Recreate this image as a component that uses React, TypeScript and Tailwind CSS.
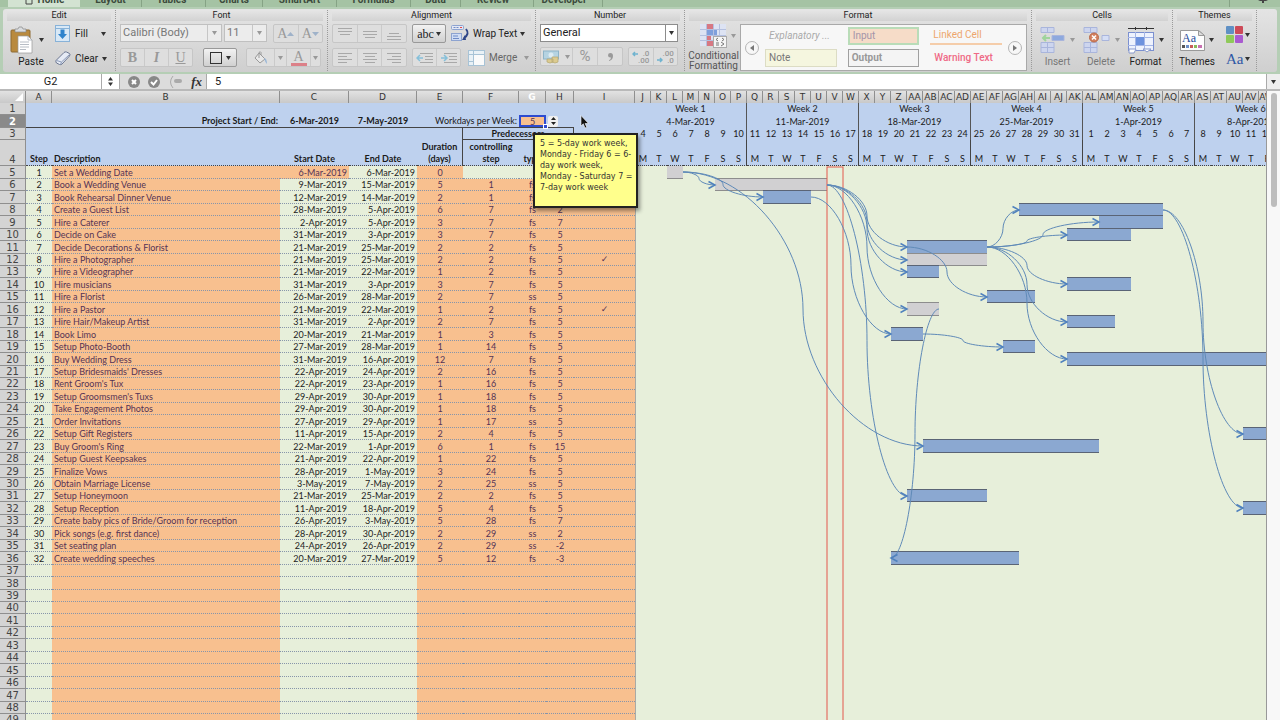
import { FC, ReactNode } from 'react';

type Task = [string, string, string, number, string, string, string, boolean?];

// description, start, end, duration, controlling step, type, lag, fixed
const TASKS: Task[] = [
    ['Set a Wedding Date', '6-Mar-2019', '6-Mar-2019', 0, '', '', ''],
    ['Book a Wedding Venue', '9-Mar-2019', '15-Mar-2019', 5, '1', 'fs', '5'],
    ['Book Rehearsal Dinner Venue', '12-Mar-2019', '14-Mar-2019', 2, '1', 'fs', '5'],
    ['Create a Guest List', '28-Mar-2019', '5-Apr-2019', 6, '7', 'fs', '2'],
    ['Hire a Caterer', '2-Apr-2019', '5-Apr-2019', 3, '7', 'fs', '7'],
    ['Decide on Cake', '31-Mar-2019', '3-Apr-2019', 3, '7', 'fs', '5'],
    ['Decide Decorations & Florist', '21-Mar-2019', '25-Mar-2019', 2, '2', 'fs', '5'],
    ['Hire a Photographer', '21-Mar-2019', '25-Mar-2019', 2, '2', 'fs', '5', true],
    ['Hire a Videographer', '21-Mar-2019', '22-Mar-2019', 1, '2', 'fs', '5'],
    ['Hire musicians', '31-Mar-2019', '3-Apr-2019', 3, '7', 'fs', '5'],
    ['Hire a Florist', '26-Mar-2019', '28-Mar-2019', 2, '7', 'ss', '5'],
    ['Hire a Pastor', '21-Mar-2019', '22-Mar-2019', 1, '2', 'fs', '5', true],
    ['Hire Hair/Makeup Artist', '31-Mar-2019', '2-Apr-2019', 2, '7', 'fs', '5'],
    ['Book Limo', '20-Mar-2019', '21-Mar-2019', 1, '3', 'fs', '5'],
    ['Setup Photo-Booth', '27-Mar-2019', '28-Mar-2019', 1, '14', 'fs', '5'],
    ['Buy Wedding Dress', '31-Mar-2019', '16-Apr-2019', 12, '7', 'fs', '5'],
    ["Setup Bridesmaids' Dresses", '22-Apr-2019', '24-Apr-2019', 2, '16', 'fs', '5'],
    ["Rent Groom's Tux", '22-Apr-2019', '23-Apr-2019', 1, '16', 'fs', '5'],
    ["Setup Groomsmen's Tuxs", '29-Apr-2019', '30-Apr-2019', 1, '18', 'fs', '5'],
    ['Take Engagement Photos', '29-Apr-2019', '30-Apr-2019', 1, '18', 'fs', '5'],
    ['Order Invitations', '27-Apr-2019', '29-Apr-2019', 1, '17', 'ss', '5'],
    ['Setup Gift Registers', '11-Apr-2019', '15-Apr-2019', 2, '4', 'fs', '5'],
    ["Buy Groom's Ring", '22-Mar-2019', '1-Apr-2019', 6, '1', 'fs', '15'],
    ['Setup Guest Keepsakes', '21-Apr-2019', '22-Apr-2019', 1, '22', 'fs', '5'],
    ['Finalize Vows', '28-Apr-2019', '1-May-2019', 3, '24', 'fs', '5'],
    ['Obtain Marriage License', '3-May-2019', '7-May-2019', 2, '25', 'ss', '5'],
    ['Setup Honeymoon', '21-Mar-2019', '25-Mar-2019', 2, '2', 'fs', '5'],
    ['Setup Reception', '11-Apr-2019', '18-Apr-2019', 5, '4', 'fs', '5'],
    ['Create baby pics of Bride/Groom for reception', '26-Apr-2019', '3-May-2019', 5, '28', 'fs', '7'],
    ['Pick songs (e.g. first dance)', '28-Apr-2019', '30-Apr-2019', 2, '29', 'ss', '2'],
    ['Set seating plan', '24-Apr-2019', '26-Apr-2019', 2, '29', 'ss', '-2'],
    ['Create wedding speeches', '20-Mar-2019', '27-Mar-2019', 5, '12', 'fs', '-3'],
];

const ROWS = 46;
const DAY = 16;

// sheet row, first day, number of days, done
const BARS: [number, number, number, boolean?][] = [
    [5, 2, 1, true],
    [6, 5, 7, true],
    [7, 8, 3],
    [8, 24, 9],
    [9, 29, 4],
    [10, 27, 4],
    [11, 17, 5],
    [12, 17, 5, true],
    [13, 17, 2],
    [14, 27, 4],
    [15, 22, 3],
    [16, 17, 2, true],
    [17, 27, 3],
    [18, 16, 2],
    [19, 23, 2],
    [20, 27, 17],
    [26, 38, 5],
    [27, 18, 11],
    [31, 17, 5],
    [32, 38, 8],
    [36, 16, 8],
];

// from row, from day, to row, to day
const LINKS = [
    [5, 3, 6, 5],
    [5, 3, 7, 8],
    [5, 3, 27, 18],
    [6, 12, 11, 17],
    [6, 12, 12, 17],
    [6, 12, 13, 17],
    [6, 12, 16, 17],
    [6, 12, 31, 17],
    [7, 11, 18, 16],
    [11, 17, 15, 22],
    [11, 22, 8, 24],
    [11, 22, 9, 29],
    [11, 22, 10, 27],
    [11, 22, 14, 27],
    [11, 22, 17, 27],
    [11, 22, 20, 27],
    [18, 18, 19, 23],
    [16, 19, 36, 16],
    [8, 33, 26, 38],
    [8, 33, 32, 38],
];

const WEEKS = ['4-Mar-2019', '11-Mar-2019', '18-Mar-2019', '25-Mar-2019', '1-Apr-2019', '8-Apr-2019'];
const DAYS = Array.from({ length: WEEKS.length * 7 }, (_, i) => i);

const columnName = (n: number): string =>
    (n >= 26 ? String.fromCharCode(64 + Math.floor(n / 26)) : '') + String.fromCharCode(65 + (n % 26));

// rows alternate between 13 and 12 pixels, four tall ones in every nine
const isTall = (i: number) => i % 9 !== 8 && (i % 9) % 2 === 0;
const rowTop = (i: number) => 12 * i + 4 * Math.floor(i / 9) + Math.ceil((i % 9) / 2);
const rowMid = (row: number) => rowTop(row - 5) + 6;

const Caret: FC<{ dim?: boolean }> = ({ dim }) => (
    <svg width="5" height="4" viewBox="0 0 5 4" className="shrink-0">
        <path d="M0 0h5L2.5 4z" fill={dim ? '#999' : '#333'} />
    </svg>
);

const Group: FC<{ title: string; className: string; children: ReactNode }> = ({ title, className, children }) => (
    <section className={`flex flex-col border-r border-dotted border-[#9a9a9a] ${className}`}>
        <h2 className="mx-1 h-[11px] bg-linear-to-b from-[#e6e6e6] to-[#d2d2d2] text-center text-[9px] leading-[11px] text-[#222]">
            {title}
        </h2>
        {children}
    </section>
);

const box = 'flex h-[19px] items-stretch rounded-[2px] border border-[#c6c6c6] bg-[#dedede] text-[#999]';
const cell = 'flex flex-1 items-center justify-center border-r border-[#cacaca] last:border-r-0';

const Lines: FC<{ rows: number[][] }> = ({ rows }) => (
    <svg width="16" height="14" viewBox="0 0 16 14" fill="none" stroke="#a8a8a8">
        {rows.map(([x, w, y]) => (
            <path key={y} d={`M${x} ${y}.5h${w}`} />
        ))}
    </svg>
);

const TABS: [string, string][] = [
    ['Layout', 'w-[62px]'],
    ['Tables', 'w-[64px] pr-1'],
    ['Charts', 'w-[57px]'],
    ['SmartArt', 'w-[74px]'],
    ['Formulas', 'w-[74px]'],
    ['Data', 'w-[50px]'],
    ['Review', 'w-[73px] pr-2'],
    ['Developer', 'w-[69px] pr-2'],
];

const TabBar = () => (
    <nav className="flex h-[7px] shrink-0 items-end overflow-hidden bg-[#a5c3a4] pl-2 text-[10px] font-bold leading-[15px] text-[#3c4a3c]">
        <a href="#home" className="flex w-[72px] items-center justify-center gap-1 bg-[#d3e3d2]">
            <svg width="10" height="10" viewBox="0 0 10 10" fill="none" stroke="#444">
                <path d="M1 5l4-4 4 4M2 5v4h6V5" />
            </svg>
            Home
        </a>
        {TABS.map(([name, width]) => (
            <a key={name} href={`#${name}`} className={`border-r border-[#86a385] text-center ${width}`}>
                {name}
            </a>
        ))}
        <span className="ml-auto mr-3 flex h-full items-start border-l border-[#86a385] pl-7">
            <svg width="10" height="4" viewBox="0 0 10 4">
                <path d="M0 0h10l-2 1H6v2H4V1H2z" fill="#444" />
            </svg>
        </span>
    </nav>
);

const EditGroup = () => (
    <Group title="Edit" className="w-[113px]">
        <div className="flex pl-[6px] pt-[3px]">
            <button className="flex w-10 flex-col text-[10px] leading-[12px]">
                <span className="flex items-center gap-[6px] pb-[2px] pt-[2px]">
                    <svg width="24" height="28" viewBox="0 0 24 28">
                        <rect x="2" y="4" width="19" height="22" rx="1" fill="#b98a3e" stroke="#8d6a33" />
                        <path d="M6 6V3h3l1-2h3l1 2h3v3z" fill="#d9dcdf" stroke="#888" strokeWidth=".7" />
                        <path d="M9 10h10l4 4v13H9z" fill="#fff" stroke="#999" strokeWidth=".7" />
                        <path d="M19 10v4h4M11 16h9M11 18.500h9M11 21h9M11 23.500h6" fill="none" stroke="#a5acb6" strokeWidth=".8" />
                    </svg>
                    <Caret />
                </span>
                <span className="pl-1">Paste</span>
            </button>
            <div className="flex flex-col gap-[6px] pl-[6px] text-[10px]">
                <button className="flex h-[19px] w-[51px] items-center gap-[5px]">
                    <svg width="15" height="17" viewBox="0 0 15 17" className="shrink-0">
                        <rect x=".5" y=".5" width="14" height="16" fill="#d8e8f6" stroke="#88b2d8" />
                        <path d="M.5 3.500h14" stroke="#88b2d8" />
                        <path d="M5.500 4.500h4v4.500H12l-4.500 5L3 9h2.500z" fill="#2e83cc" />
                    </svg>
                    <span className="flex-1 text-left">Fill</span>
                    <Caret />
                </button>
                <button className="flex h-[19px] w-[51px] items-center gap-1">
                    <svg width="16" height="15" viewBox="0 0 16 15" className="shrink-0">
                        <path d="M1 9.500L9 1.500q1-1 2.500-.5l3 1.500q1 1 0 2.500L7 13q-1 1-2.500.5L1.500 12Q.5 11 1 9.500z" fill="#e6ebf5" stroke="#6b7690" />
                        <path d="M1.500 9.500l5 1.500L14.500 3.500M6.500 11L5.500 13.500" fill="none" stroke="#8b9ab8" />
                    </svg>
                    <span className="flex-1 text-left">Clear</span>
                    <Caret />
                </button>
            </div>
        </div>
    </Group>
);

const FontGroup = () => (
    <Group title="Font" className="w-[212px]">
        <div className="flex flex-col gap-[5px] px-1 pt-[3px]">
            <div className="flex gap-[2px]">
                <label className="flex h-[18px] w-[102px] items-center border border-[#c0c0c0] bg-[#ececec] pr-1">
                    <select aria-label="Font" disabled className="h-4 min-w-0 flex-1 appearance-none pl-[2px] text-[11px] text-[#777]">
                        <option>Calibri (Body)</option>
                    </select>
                    <span className="mr-1 h-full border-l border-[#c6c6c6]" />
                    <Caret dim />
                </label>
                <label className="flex h-[18px] w-[43px] items-center border border-[#c0c0c0] bg-[#ececec] pr-1">
                    <select aria-label="Size" disabled className="h-4 min-w-0 flex-1 appearance-none pl-[2px] text-[11px] text-[#777]">
                        <option>11</option>
                    </select>
                    <span className="mr-1 h-full border-l border-[#c6c6c6]" />
                    <Caret dim />
                </label>
                <div className={`${box} ml-1 w-[50px] font-['Liberation_Serif'] text-[14px]`}>
                    <button className={cell} aria-label="Grow font">
                        A
                        <svg width="7" height="4" viewBox="0 0 7 4">
                            <path d="M0 4h7L3.500 0z" fill="#9fb2c9" />
                        </svg>
                    </button>
                    <button className={cell} aria-label="Shrink font">
                        A
                        <svg width="7" height="4" viewBox="0 0 7 4">
                            <path d="M0 0h7L3.500 4z" fill="#9fb2c9" />
                        </svg>
                    </button>
                </div>
            </div>
            <div className="flex font-['Liberation_Serif'] text-[14px]">
                <div className={`${box} w-[73px]`}>
                    <button className={`${cell} font-bold`}>B</button>
                    <button className={`${cell} font-bold italic`}>I</button>
                    <button className={`${cell} underline`}>U</button>
                </div>
                <button
                    aria-label="Borders"
                    className="ml-[10px] flex h-[19px] w-[34px] items-center justify-center gap-1 rounded-[2px] border border-[#999] bg-linear-to-b from-[#f2f2f2] to-[#d0d0d0]"
                >
                    <span className="h-3 w-3 border border-[#333]" />
                    <Caret />
                </button>
                <div className={`${box} ml-[9px] w-[75px]`}>
                    <button className="flex w-7 items-center justify-center border-r border-[#cacaca]" aria-label="Fill colour">
                        <svg width="15" height="14" viewBox="0 0 15 14" fill="none">
                            <path d="M6 2l6 6-5 4-5-5z" fill="#e8e8e8" stroke="#999" />
                            <path d="M6 7V1.500q1.500-1.500 2 0V4" stroke="#999" />
                            <path d="M11 7q3 0 3 6-2-2-3-6z" fill="#9bb8d8" />
                        </svg>
                    </button>
                    <span className="flex w-3 items-center justify-center border-r border-[#cacaca]">
                        <Caret dim />
                    </span>
                    <button className="flex w-6 items-center justify-center border-r border-[#cacaca]" aria-label="Font colour">
                        <span className="w-4 border-b-[3px] border-[#dc8088] leading-[13px]">A</span>
                    </button>
                    <span className="flex flex-1 items-center justify-center">
                        <Caret dim />
                    </span>
                </div>
            </div>
        </div>
    </Group>
);

const AlignmentGroup = () => (
    <Group title="Alignment" className="w-[208px]">
        <div className="flex flex-col gap-[5px] pl-1 pt-[3px] text-[10px]">
            <div className="flex items-center">
                <div className={`${box} w-[75px]`}>
                    <button className={cell} aria-label="Top"><Lines rows={[[1, 14, 1], [1, 14, 4], [3, 10, 7]]} /></button>
                    <button className={cell} aria-label="Middle"><Lines rows={[[1, 14, 4], [1, 14, 7], [3, 10, 10]]} /></button>
                    <button className={cell} aria-label="Bottom"><Lines rows={[[3, 10, 6], [1, 14, 9], [1, 14, 12]]} /></button>
                </div>
                <button className="ml-[5px] flex h-[19px] w-[34px] items-center justify-center gap-[2px] rounded-[2px] border border-[#999] bg-linear-to-b from-[#f2f2f2] to-[#d0d0d0] font-['Liberation_Serif'] text-[12px]">
                    abc
                    <Caret />
                </button>
                <button className="ml-[5px] flex items-center gap-[3px]">
                    <svg width="19" height="17" viewBox="0 0 19 17" fill="none">
                        <rect x=".5" y=".5" width="12" height="4" rx="1" fill="#e4e8f4" stroke="#8da3d0" />
                        <path d="M2.500 2.500h5" stroke="#6f8bc6" strokeDasharray="2 1" />
                        <path d="M9 2.500h2" stroke="#e0474c" />
                        <rect x=".5" y="8.500" width="10" height="7" fill="#cfdcf4" stroke="#8da3d0" />
                        <path d="M2 11h5M2 13.500h6" stroke="#6f8bc6" />
                        <path d="M15 4q4 5-2 9" stroke="#2f4688" strokeWidth="2" />
                        <path d="M15 15h-4l3-5z" fill="#2f4688" />
                    </svg>
                    <span className="w-11 whitespace-nowrap text-left">Wrap Text</span>
                    <Caret />
                </button>
            </div>
            <div className="flex items-center">
                <div className={`${box} w-[75px]`}>
                    <button className={cell} aria-label="Left"><Lines rows={[[1, 14, 2], [1, 9, 5], [1, 14, 8], [1, 9, 11]]} /></button>
                    <button className={cell} aria-label="Center"><Lines rows={[[1, 14, 2], [3, 10, 5], [1, 14, 8], [3, 10, 11]]} /></button>
                    <button className={cell} aria-label="Right"><Lines rows={[[1, 14, 2], [6, 9, 5], [1, 14, 8], [6, 9, 11]]} /></button>
                </div>
                <div className={`${box} ml-[5px] w-[49px]`}>
                    <button className={cell} aria-label="Outdent">
                        <svg width="18" height="14" viewBox="0 0 18 14" fill="none" stroke="#a8a8a8">
                            <path d="M4 2.500h13M9 5.500h8M9 8.500h8M4 11.500h13" />
                            <path d="M7 7H1m3-3L1 7l3 3" stroke="#86c0da" strokeWidth="1.500" />
                        </svg>
                    </button>
                    <button className={cell} aria-label="Indent">
                        <svg width="18" height="14" viewBox="0 0 18 14" fill="none" stroke="#a8a8a8">
                            <path d="M4 2.500h13M9 5.500h8M9 8.500h8M4 11.500h13" />
                            <path d="M1 7h6M4 4l3 3-3 3" stroke="#86c0da" strokeWidth="1.500" />
                        </svg>
                    </button>
                </div>
                <button className="ml-[7px] flex items-center gap-1 text-[#666]">
                    <svg width="17" height="16" viewBox="0 0 17 16" fill="none" stroke="#a8c3d6">
                        <rect x=".5" y=".5" width="16" height="15" fill="#e9f1f6" />
                        <path d="M.5 4.500h16M5.500 .5v15M.5 11.500h5" />
                        <path d="M6 5h10v10H6z" fill="#fafafa" stroke="none" />
                    </svg>
                    <span className="w-[31px] text-left">Merge</span>
                    <Caret dim />
                </button>
            </div>
        </div>
    </Group>
);

const NumberGroup = () => (
    <Group title="Number" className="w-[149px]">
        <div className="flex flex-col gap-[5px] pl-1 pr-[6px] pt-[3px]">
            <label className="flex h-[18px] items-center border border-[#8c8c8c] bg-white pr-[3px]">
                <select aria-label="Number format" className="h-4 flex-1 appearance-none pl-[2px] text-[11px] text-[#222]">
                    <option>General</option>
                </select>
                <span className="mr-[3px] h-full border-l border-[#8c8c8c]" />
                <Caret />
            </label>
            <div className="flex justify-between">
                <div className={`${box} w-[83px] text-[15px]`}>
                    <button className="flex w-8 items-center justify-center gap-[5px] border-r border-[#cacaca]" aria-label="Currency">
                        <svg width="17" height="14" viewBox="0 0 17 14">
                            <rect x=".5" y="1" width="15" height="8" fill="#b5d3e2" stroke="#8eb4c8" />
                            <circle cx="8" cy="5" r="2.500" fill="#dcebf2" />
                            <path d="M9 7h6v5q-3 2-6 0zM4 9h6v3q-3 2-6 0z" fill="#dccb90" stroke="#b5a873" strokeWidth=".7" />
                        </svg>
                        <Caret dim />
                    </button>
                    <button className={cell}>%</button>
                    <button className={cell} aria-label="Comma style">
                        <svg width="5" height="8" viewBox="0 0 5 8">
                            <path d="M2.500 0q2.500 0 2.500 3 0 4-4 5v-.8Q3 6.500 3 4.500 0 4.800 0 2.300 0 0 2.500 0z" fill="#999" />
                        </svg>
                    </button>
                </div>
                <div className={`${box} w-[50px] text-[8px] font-medium leading-[7px]`}>
                    <button className={cell}>
                        <svg width="6" height="12" viewBox="0 0 6 12" fill="none" stroke="#6fb3cf" strokeWidth="1.500"><path d="M6 3H1m2-2L1 3l2 2" /></svg>
                        <span className="text-right">.0<br />.00</span>
                    </button>
                    <button className={cell}>
                        <svg width="6" height="12" viewBox="0 0 6 12" fill="none" stroke="#6fb3cf" strokeWidth="1.500"><path d="M0 9h5M3 7l2 2-2 2" /></svg>
                        <span className="text-right">.00<br />.0</span>
                    </button>
                </div>
            </div>
        </div>
    </Group>
);

const styleCell = 'flex h-[18px] items-center border px-[3px] text-[10px]';

const FormatGroup = () => (
    <Group title="Format" className="min-w-[347px] flex-1">
        <div className="flex flex-1 gap-[2px] pb-[2px] pl-1 pt-[3px]">
            <button className="flex w-[49px] flex-col items-center text-[10px] leading-[10px] text-[#555]">
                <span className="flex items-center gap-1 pb-[3px] pl-2">
                    <svg width="27" height="24" viewBox="0 0 27 24">
                        <path d="M0 0h26v22H0z" fill="#dde3f3" />
                        <path d="M6 0h7v5H6zM6 17h7v5H6zM6 11h5v6H6z" fill="#d77883" />
                        <path d="M6 6h11v5H6z" fill="#7f9fdc" />
                        <path d="M0 5.500h26M0 11.500h26M0 16.500h26M6.500 0v22M13.500 0v22M19.500 0v22" stroke="#b4c0e0" />
                        <rect x="13.500" y="12.500" width="13" height="11" fill="#f5f5f5" stroke="#aaa" />
                        <path d="M18 14l-2 1.500 2 1.500M22 14l2 1.500-2 1.500M16 19h3m-3 2h3M21 18l3 2-3 2" fill="none" stroke="#777" />
                    </svg>
                    <Caret dim />
                </span>
                <span>Conditional</span>
                <span>Formatting</span>
            </button>
            <div className="mr-1 flex flex-1 items-center justify-between border border-[#a9a9a9] bg-[#f7f7f7] px-1">
                <button className="flex h-[14px] w-[14px] items-center justify-center rounded-full border border-[#b5b5b5]" aria-label="Previous styles">
                    <svg width="4" height="6" viewBox="0 0 4 6"><path d="M4 0v6L0 3z" fill="#777" /></svg>
                </button>
                <div className="grid flex-1 grid-cols-3 gap-x-[11px] gap-y-1 px-[6px] pb-[2px]">
                    <button className={`${styleCell} whitespace-nowrap border-transparent italic text-[#aaa]`}>Explanatory ...</button>
                    <button className={`${styleCell} border-2 border-[#b9dcb8] bg-[#f6dcc8] text-[#a494a8]`}>Input</button>
                    <button className={`${styleCell} whitespace-nowrap border-0 border-b-2 border-[#f5cdaa] text-[#eda66c]`}>Linked Cell</button>
                    <button className={`${styleCell} border-[#dcdcc4] bg-[#f5f6df] text-[#777]`}>Note</button>
                    <button className={`${styleCell} border-[#a0a0a0] bg-[#f4f4f4] font-bold text-[#999]`}>Output</button>
                    <button className={`${styleCell} whitespace-nowrap border-transparent font-medium text-[#ef6a86]`}>Warning Text</button>
                </div>
                <button className="flex h-[14px] w-[14px] items-center justify-center rounded-full border border-[#b5b5b5]" aria-label="More styles">
                    <svg width="4" height="6" viewBox="0 0 4 6"><path d="M0 0v6l4-3z" fill="#777" /></svg>
                </button>
            </div>
        </div>
    </Group>
);

const big = 'flex flex-col items-center gap-[2px] text-[10px] leading-[12px]';

const CellsGroup = () => (
    <Group title="Cells" className="w-[141px]">
        <div className="flex justify-between px-2 pt-[5px]">
            <button className={`${big} text-[#777]`}>
                <span className="flex h-7 items-center gap-[5px]">
                    <svg width="25" height="27" viewBox="0 0 25 27" fill="#cdd5ee" stroke="#a9b5dc">
                        <path d="M1 .5h13v5H1zM7.500 .5v5M1 15.500h13v10H1zM7.500 15.500v10M1 20.500h13" />
                        <path d="M12 8.500h12v5H12z" fill="#8ea9de" />
                        <path d="M10 11H3m3-3l-3 3 3 3" fill="none" stroke="#9fd49c" strokeWidth="2" />
                    </svg>
                    <Caret dim />
                </span>
                Insert
            </button>
            <button className={`${big} text-[#777]`}>
                <span className="flex h-7 items-center gap-[5px]">
                    <svg width="27" height="27" viewBox="0 0 27 27" fill="#cdd5ee" stroke="#a9b5dc">
                        <path d="M1 .5h13v5H1zM7.500 .5v5M1 15.500h13v10H1zM7.500 15.500v10M1 20.500h13" />
                        <path d="M19 8.500h7v5h-7z" fill="#d5def5" />
                        <circle cx="11" cy="10.500" r="4.500" fill="#d3805f" stroke="#b9694a" />
                        <path d="M9 8.500l4 4m0-4l-4 4" stroke="#fff" strokeWidth="1.500" />
                    </svg>
                    <Caret dim />
                </span>
                Delete
            </button>
            <button className={`${big} text-[#222]`}>
                <span className="flex h-7 items-center gap-1">
                    <svg width="28" height="27" viewBox="0 0 28 27" fill="none">
                        <path d="M1 1.500h26M8.500 0v3M19.500 0v3" stroke="#333" />
                        <rect x="1.500" y="5.500" width="25" height="18" fill="#eef2fd" stroke="#7b90d0" />
                        <path d="M8.500 5v19M17.500 5v19M1 10.500h25M1 18.500h25" stroke="#a5b6e6" />
                        <path d="M9 10h8v8H9z" fill="#6d92de" />
                        <path d="M2 22h7l-2 4H2zM16 22h8l-4 3z" fill="#fff" stroke="#8899cc" />
                    </svg>
                    <Caret />
                </span>
                Format
            </button>
        </div>
    </Group>
);

const ThemesGroup = () => (
    <Group title="Themes" className="w-[84px]">
        <div className="flex justify-between pl-[6px] pr-[6px] pt-[5px]">
            <button className={`${big} text-[#222]`}>
                <span className="flex h-7 items-center gap-[3px]">
                    <svg width="26" height="23" viewBox="0 0 26 23">
                        <path d="M.5 1.500h18l6 5v15H.5z" fill="#fdfdfd" stroke="#999" />
                        <path d="M18.500 1.500v5h6z" fill="#ddd" stroke="#999" />
                        <text x="2" y="13" fontFamily="Liberation Serif, serif" fontSize="12" fill="#234a9a">Aa</text>
                        <path d="M2 16h3v3H2z" fill="#555" />
                        <path d="M6 16h3v3H6z" fill="#6d8fc8" />
                        <path d="M10 16h3v3h-3z" fill="#c95a5a" />
                        <path d="M14 16h3v3h-3z" fill="#8bb95a" />
                        <path d="M18 16h4v3h-4z" fill="#c86fb0" />
                    </svg>
                    <Caret />
                </span>
                Themes
            </button>
            <div className="flex flex-col gap-[8px]">
                <button className="flex items-center gap-[2px]" aria-label="Theme colours">
                    <svg width="17" height="17" viewBox="0 0 17 17">
                        <rect width="8" height="8" rx="1" fill="#5f90c4" />
                        <rect x="9" width="8" height="8" rx="1" fill="#cd4a58" />
                        <rect y="9" width="8" height="8" rx="1" fill="#8fc95a" />
                        <rect x="9" y="9" width="8" height="8" rx="1" fill="#a95ad0" />
                    </svg>
                    <Caret />
                </button>
                <button className="flex items-center gap-[1px] font-['Liberation_Serif'] text-[15px] leading-[16px] text-[#2f57a5]">
                    Aa
                    <Caret />
                </button>
            </div>
        </div>
    </Group>
);

const FormulaBar = () => (
    <div className="flex h-[15px] shrink-0 items-center bg-white text-[11px] text-[#222]">
        <input aria-label="Cell" defaultValue="G2" className="h-full w-[102px] border-r border-[#aaa] text-center" />
        <span className="flex w-[17px] justify-center">
            <svg width="5" height="9" viewBox="0 0 5 9"><path d="M0 3.500h5L2.500 0zM0 5.500h5L2.500 9z" fill="#333" /></svg>
        </span>
        <div className="flex h-full w-[88px] items-center justify-between border-x border-[#aaa] bg-[#dcdcdc] pl-2 pr-1">
            <button aria-label="Cancel">
                <svg width="12" height="12" viewBox="0 0 12 12"><circle cx="6" cy="6" r="6" fill="#888" /><path d="M4 4l4 4m0-4L4 8" stroke="#fff" strokeWidth="2" /></svg>
            </button>
            <button aria-label="Enter">
                <svg width="12" height="12" viewBox="0 0 12 12" fill="none"><circle cx="6" cy="6" r="6" fill="#888" /><path d="M3 6l2.500 2.500L9 4" stroke="#fff" strokeWidth="2" /></svg>
            </button>
            <button aria-label="Functions">
                <svg width="14" height="14" viewBox="0 0 14 14" fill="none"><path d="M4 1q-5 6 0 12" stroke="#aaa" /><rect x="5" y="4" width="8" height="4" rx="2" fill="#aaa" /></svg>
            </button>
            <span className="font-['Liberation_Serif'] text-[13px] font-bold italic leading-[14px] text-[#333]">fx</span>
        </div>
        <input aria-label="Formula" defaultValue="5" className="h-full min-w-0 flex-1 px-2" />
        <button className="flex h-full w-[14px] items-center justify-center border-l border-[#aaa] bg-[#eee]" aria-label="Expand">
            <Caret />
        </button>
    </div>
);

const letter =
    "h-3 border-r border-[#8f8f8f] bg-linear-to-b from-[#e2e2e2] to-[#c9c9c9] text-center font-['DejaVu_Sans'] text-[9px] leading-[11px] text-[#333]";
const rowHead =
    "border-b border-r border-[#8f8f8f] bg-[#d4d4d4] text-center align-bottom font-['DejaVu_Sans'] text-[10px] leading-[11px] text-[#444]";

const line = 'border-b border-dotted border-[#8795aa]';
const orange = `${line} bg-[#f8c08f] text-[#553355]`;
const green = `${line} bg-[#e7efda] text-[#222]`;
const headLine = 'border-b border-[#444] [border-bottom-style:dotted]';

const SheetTable = () => (
    <table className="w-[635px] shrink-0 table-fixed border-separate border-spacing-0 self-start whitespace-nowrap">
        <colgroup>
            <col className="w-[26px]" />
            <col className="w-[26px]" />
            <col className="w-[228px]" />
            <col className="w-[69px]" />
            <col className="w-[68px]" />
            <col className="w-[46px]" />
            <col className="w-[56px]" />
            <col className="w-[27px]" />
            <col className="w-[28px]" />
            <col className="w-[61px]" />
        </colgroup>
        <thead className="bg-[#bed1ee] text-[9px] leading-[12px] text-[#1a1a1a]">
            <tr>
                <td className={letter}>
                    <svg width="8" height="8" viewBox="0 0 8 8" className="ml-auto mr-[2px]"><path d="M8 0v8H0z" fill="#fff" /></svg>
                </td>
                {'ABCDEFGHI'.split('').map((c) => (
                    <th key={c} className={`${letter} ${c === 'G' ? 'from-[#9a9a9a] to-[#858585] text-white' : 'font-normal'}`}>
                        {c}
                    </th>
                ))}
            </tr>
            <tr>
                <th className={`${rowHead} h-3 font-normal`}>1</th>
                <td colSpan={9} />
            </tr>
            <tr>
                <th className="h-[13px] border-b border-r border-[#8f8f8f] bg-[#8a8a8a] font-['DejaVu_Sans'] text-[10px] leading-[11px] text-white">2</th>
                <th colSpan={2} className="border-b border-[#444] pr-[2px] text-right">Project Start / End:</th>
                <th className="border-b border-[#444]">6-Mar-2019</th>
                <th className="border-b border-[#444]">7-May-2019</th>
                <td colSpan={2} className="border-b border-[#444] pr-[2px] text-right">Workdays per Week:</td>
                <td className="border-b border-[#444]">
                    <div className="relative h-3 border-2 border-[#2d4bd0] bg-[#f8c08f] text-center leading-[9px] text-[#553355]">
                        5
                        <span className="absolute -bottom-1 -right-1 h-[5px] w-[5px] border border-white bg-[#2d4bd0]" />
                    </div>
                </td>
                <td className="border-b border-[#444]">
                    <button className="ml-[2px] flex h-[11px] w-[10px] items-center justify-center rounded-[2px] bg-[#f0f0f0]" aria-label="Change workdays">
                        <svg width="5" height="8" viewBox="0 0 5 8"><path d="M0 3h5L2.500 0zM0 5h5L2.500 8z" fill="#222" /></svg>
                    </button>
                </td>
                <td />
            </tr>
            <tr>
                <th className={`${rowHead} h-3 font-normal`}>3</th>
                <td colSpan={5} className="border-r border-[#444]" />
                <th colSpan={3} className="border-b border-r border-[#444] leading-[11px]">Predecessors</th>
                <td />
            </tr>
            <tr className="align-bottom">
                <th className={`${rowHead} h-[26px] font-normal`}>4</th>
                <th className={headLine}>Step</th>
                <th className={`${headLine} pl-[2px] text-left`}>Description</th>
                <th className={headLine}>Start Date</th>
                <th className={headLine}>End Date</th>
                <th className={`${headLine} border-r`}>Duration<br />(days)</th>
                <th className={headLine}>controlling<br />step</th>
                <th className={headLine}>type</th>
                <td className={`${headLine} border-r`} />
                <td className={headLine} />
            </tr>
        </thead>
        <tbody className="text-[9px] leading-[11px]">
            {Array.from({ length: ROWS }, (_, i) => {
                const [name, start, end, duration, step, type, lag, fixed] = TASKS[i] ?? [];
                const first = i === 0;
                return (
                    <tr key={i} className={isTall(i) ? 'h-[13px]' : 'h-3'}>
                        <th className={`${rowHead} font-normal`}>{i + 5}</th>
                        <td className={`${green} text-center`}>{name && i + 1}</td>
                        <td className={`${orange} pl-[2px]`}>{name}</td>
                        <td className={`${first ? orange : green} pr-[2px] text-right`}>{start}</td>
                        <td className={`${green} pr-[2px] text-right`}>{end}</td>
                        <td className={`${orange} text-center`}>{duration}</td>
                        <td className={`${first ? green : orange} text-center`}>{step}</td>
                        <td className={`${first ? green : orange} text-center`}>{type}</td>
                        <td className={`${first ? green : orange} text-center`}>{lag}</td>
                        <td className={`${first ? green : orange} text-center`}>
                            {fixed && <span className="block h-[11px] font-['DejaVu_Sans'] font-bold">✓</span>}
                        </td>
                    </tr>
                );
            })}
        </tbody>
    </table>
);

const GanttHeader = () => (
    <table className="w-[672px] table-fixed border-separate border-spacing-0 whitespace-nowrap bg-[#bed1ee] text-[9px] leading-[12px] text-[#1a1a1a]">
        <thead>
            <tr>
                {DAYS.map((d) => (
                    <th key={d} className={`${letter} font-normal`}>
                        <span className="-mx-1">{columnName(d + 9)}</span>
                    </th>
                ))}
            </tr>
            <tr>
                {WEEKS.map((w, i) => (
                    <th key={w} colSpan={7} className="h-3 border-r border-[#555] font-normal">Week {i + 1}</th>
                ))}
            </tr>
            <tr>
                {WEEKS.map((w) => (
                    <th key={w} colSpan={7} className="h-[13px] border-r border-[#555] font-normal">{w}</th>
                ))}
            </tr>
            <tr>
                {DAYS.map((d) => (
                    <th key={d} className={`h-3 font-normal ${d % 7 === 6 ? 'border-r border-[#555]' : ''}`}>
                        {d < 28 ? d + 4 : d - 27}
                    </th>
                ))}
            </tr>
            <tr>
                {DAYS.map((d) => (
                    <th key={d} className={`h-[26px] align-bottom font-normal ${headLine} ${d % 7 === 6 ? 'border-r' : ''}`}>
                        {'MTWTFSS'[d % 7]}
                    </th>
                ))}
            </tr>
        </thead>
    </table>
);

const linkPath = ([fromRow, fromDay, toRow, toDay]: number[]) => {
    const x1 = fromDay * DAY;
    const x2 = toDay * DAY;
    const y1 = rowMid(fromRow);
    const y2 = rowMid(toRow);
    const mx = (x1 + x2) / 2;
    return `M${x1} ${y1}C${(x1 + mx) / 2} ${y1} ${mx} ${y1 + (y2 - y1) / 4} ${mx} ${(y1 + y2) / 2}S${(mx + x2) / 2} ${y2} ${x2} ${y2}`;
};

const GanttChart = () => (
    <svg width="100%" height={rowTop(ROWS)} className="block bg-[#e7efda]">
        <defs>
            <marker id="arrow" markerUnits="userSpaceOnUse" markerWidth="10" markerHeight="10" refX="8" refY="5" orient="auto">
                <path d="M1.500 1.500L8 5L1.500 8.500" fill="none" stroke="#4f81bd" strokeWidth="1.500" />
            </marker>
        </defs>
        <path d={`M.5 0V${rowTop(ROWS)}`} stroke="#a9aaa5" />
        {BARS.map(([row, day, length, done]) => {
            const top = rowTop(row - 5);
            const bottom = rowTop(row - 4);
            return (
                <g key={row}>
                    <rect x={day * DAY} y={top} width={length * DAY} height={bottom - top} fill={done ? '#d1d0d2' : '#8ba8d1'} />
                    <path
                        d={`M${day * DAY} ${top - 0.5}h${length * DAY}M${day * DAY} ${bottom - 0.5}h${length * DAY}`}
                        stroke={done ? '#8d8d8d' : '#5a6476'}
                    />
                </g>
            );
        })}
        <rect x={12 * DAY} y="1" width={DAY} height={rowTop(ROWS) + 2} fill="none" stroke="#e3584c" />
        {LINKS.map((link) => (
            <path key={link.join()} d={linkPath(link)} fill="none" stroke="#5f8ab8" markerEnd="url(#arrow)" />
        ))}
    </svg>
);

const CellNote = () => (
    <aside className="absolute left-[533px] top-[42px] h-[75px] w-[105px] whitespace-nowrap border-2 border-[#222] bg-[#ffff8c] pl-[5px] pt-[3px] font-['DejaVu_Sans'] text-[8px] leading-[11px] text-[#333] shadow-[2px_3px_4px_rgba(0,0,0,0.4)]">
        5 = 5-day work week,<br />
        Monday - Friday 6 = 6-<br />
        day work week,<br />
        Monday - Saturday 7 =<br />
        7-day work week
    </aside>
);

const App = () => (
    <div className="flex h-screen flex-col overflow-hidden bg-[#e7efda] font-['Roboto',sans-serif]">
        <TabBar />
        <header className="shrink-0 bg-[#b5ceb5] px-[3px] py-[2px]">
            <div className="flex h-[63px] rounded-[3px] bg-linear-to-b from-[#e4e4e4] to-[#cfcfcf] py-[1px] text-[#222]">
                <EditGroup />
                <FontGroup />
                <AlignmentGroup />
                <NumberGroup />
                <FormatGroup />
                <CellsGroup />
                <ThemesGroup />
                <div className="w-5" />
            </div>
        </header>
        <FormulaBar />
        <div className="h-[2px] shrink-0 bg-[#b9b9b9]" />
        <main className="relative flex min-h-0 flex-1 font-['Lato',sans-serif]">
            <SheetTable />
            <div className="min-w-0 flex-1 overflow-hidden">
                <GanttHeader />
                <GanttChart />
            </div>
            <div className="flex w-[14px] justify-center border-l border-[#999] bg-[#f8f8f8] pt-[2px]">
                <span className="h-[114px] w-[6px] rounded-full bg-[#bdbdbd]" />
            </div>
            <CellNote />
            <svg className="absolute left-[580px] top-[24px]" width="10" height="14" viewBox="0 0 10 14">
                <path d="M1 .5v10.500l2.300-2.200L5 13l1.800-.8-1.700-3.700H8.500z" fill="#111" stroke="#fff" strokeWidth=".6" />
            </svg>
        </main>
    </div>
);

export default App;
